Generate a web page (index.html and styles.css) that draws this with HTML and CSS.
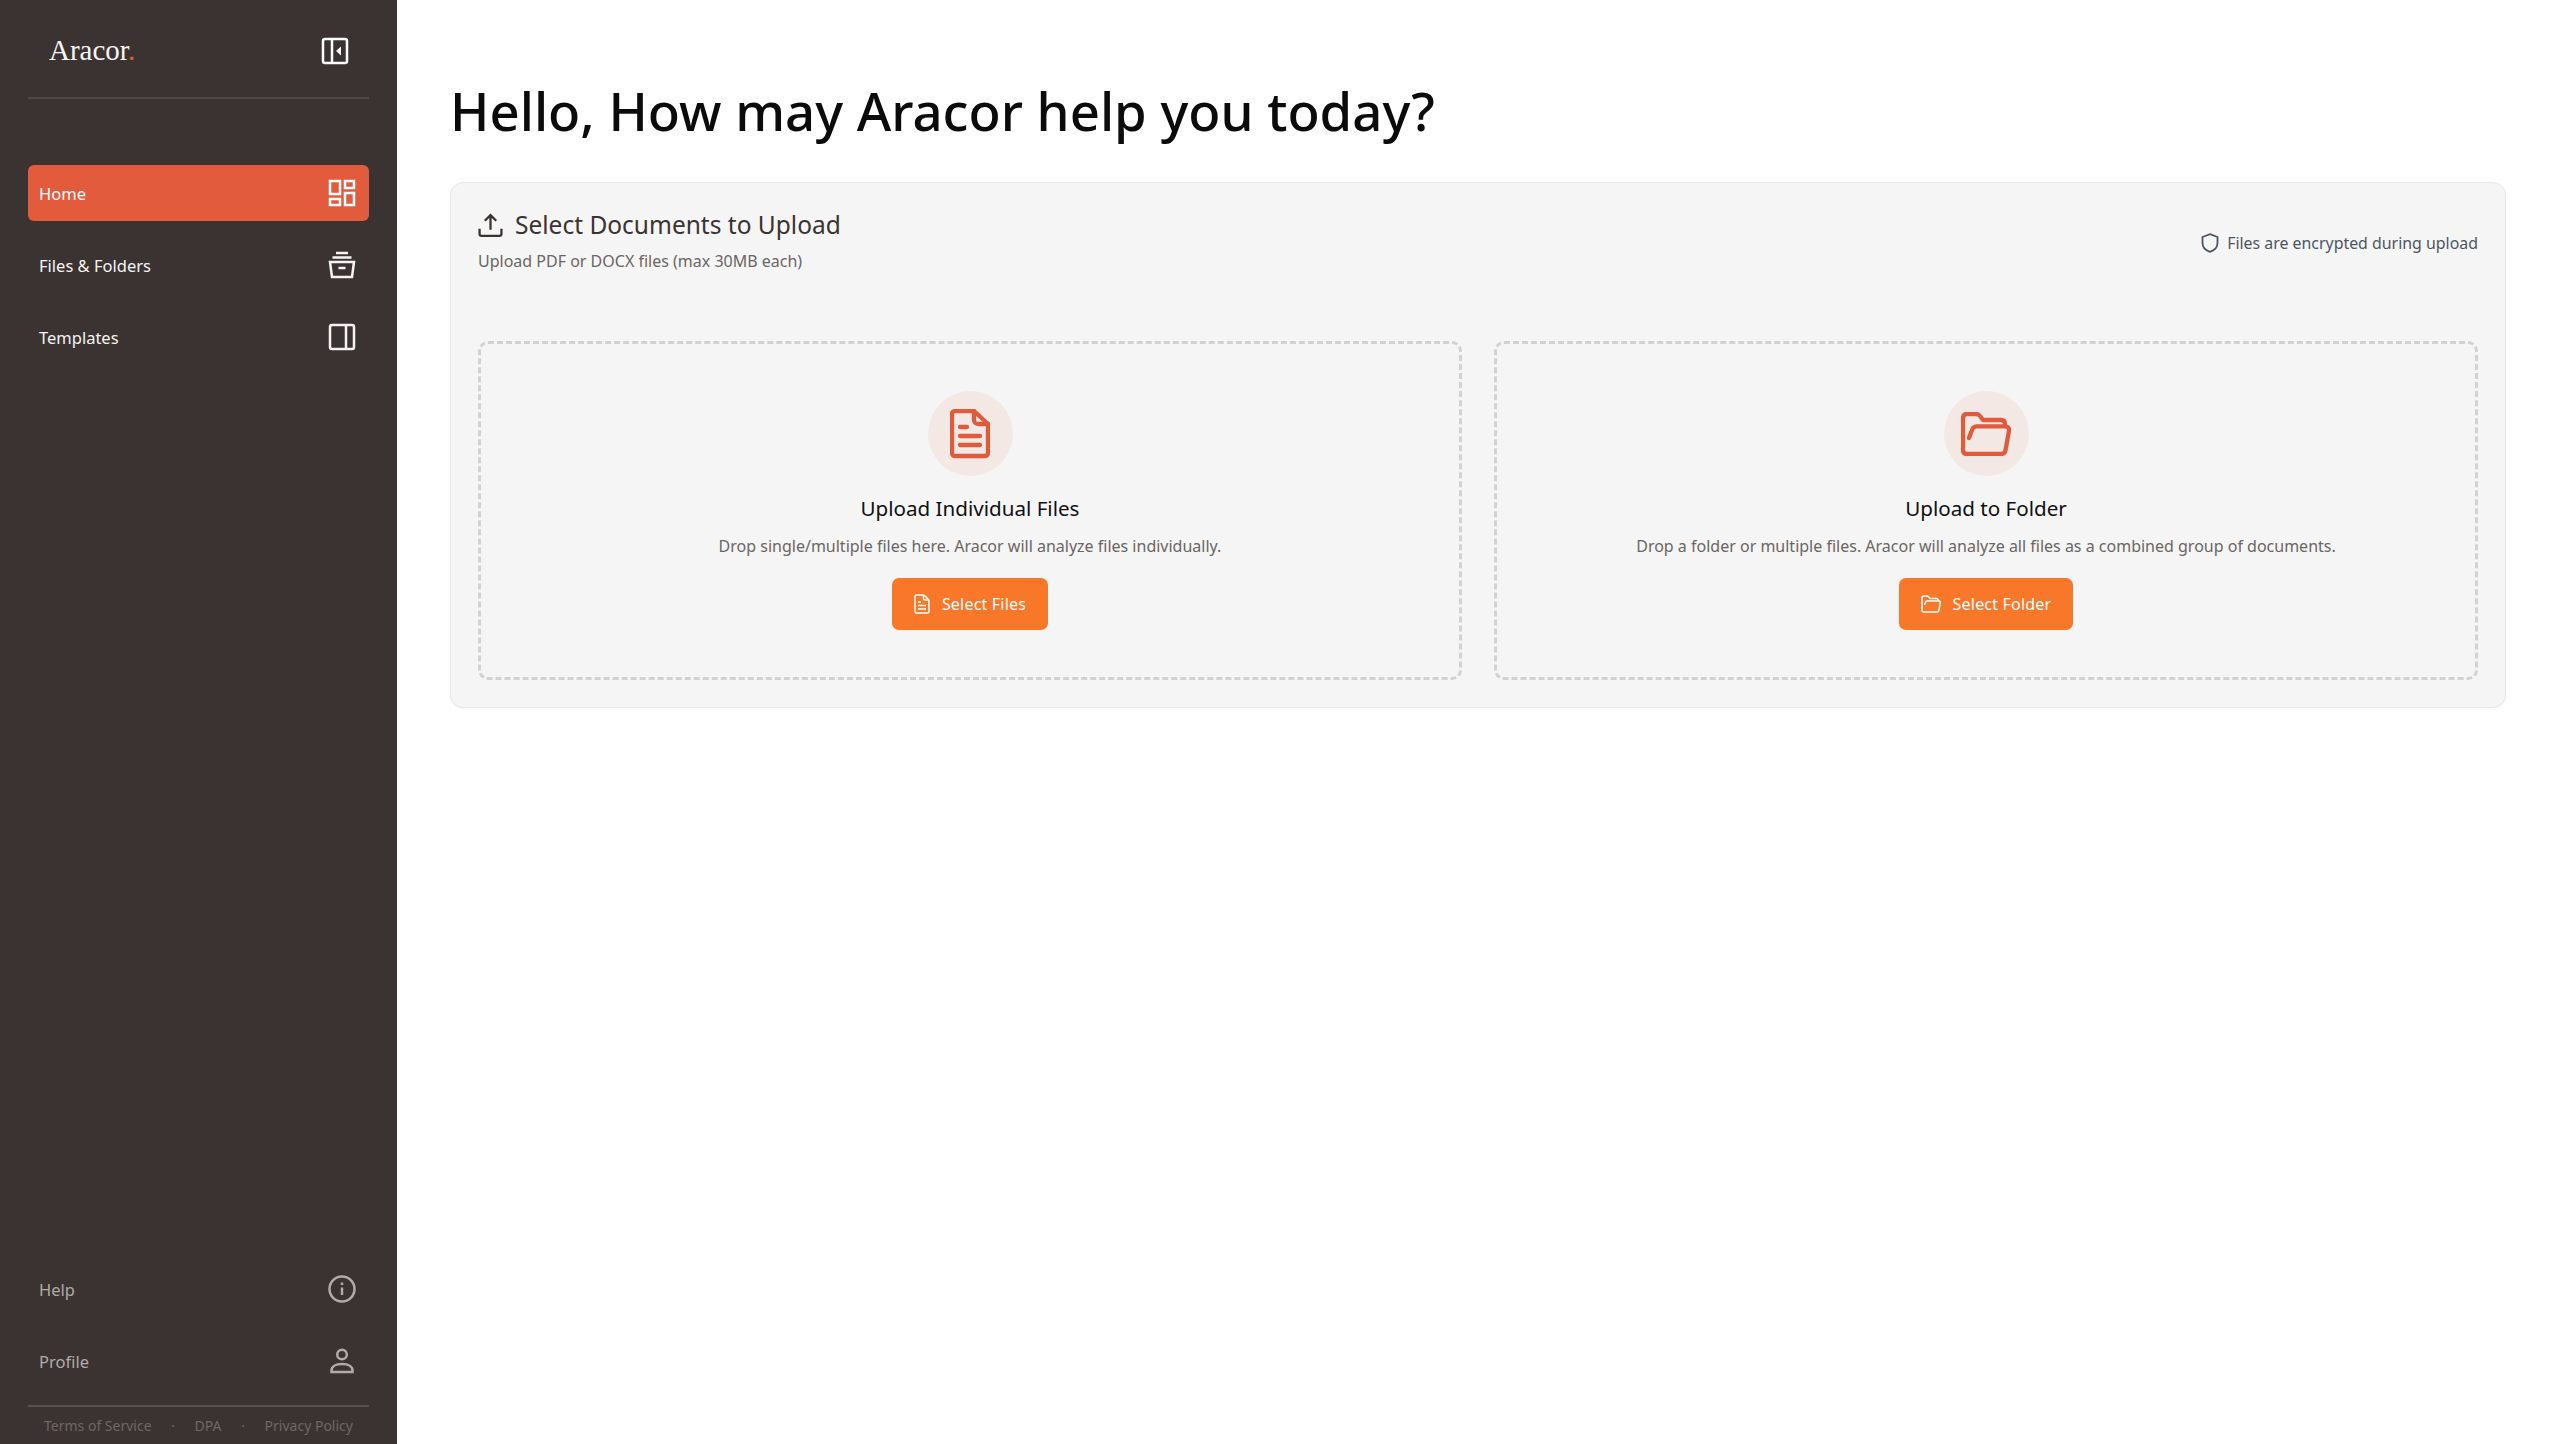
FILE: index.html
```html
<!DOCTYPE html>
<html lang="en">
<head>
<meta charset="utf-8">
<title>Aracor</title>
<link rel="stylesheet" href="styles.css">
</head>
<body>
<div class="app">
  <aside class="sidebar">
    <div class="brand">
      <span class="logo">Aracor<span class="dot">.</span></span>
      <svg class="ico collapse" viewBox="0 0 28 28"><rect x="2" y="2" width="24" height="24" rx="2"/><path d="M11 2v24"/><path class="fill" d="M20 9.500v9l-5-4.500z"/></svg>
    </div>
    <nav class="nav">
      <a class="item active">Home
        <svg class="ico" viewBox="0 0 28 28"><rect x="2" y="2" width="10" height="13"/><rect x="17" y="2" width="9" height="7"/><rect x="2" y="20" width="10" height="6"/><rect x="17" y="14" width="9" height="12"/></svg>
      </a>
      <a class="item">Files &amp; Folders
        <svg class="ico" viewBox="0 0 28 28"><path d="M8 2h12M4.500 6.500h19"/><path d="M2 11h24l-2 15H4z"/><path d="M10.500 17h7"/></svg>
      </a>
      <a class="item">Templates
        <svg class="ico" viewBox="0 0 28 28"><rect x="2" y="2" width="24" height="24" rx="2"/><path d="M18 2v24"/></svg>
      </a>
    </nav>
    <div class="bottom">
      <a class="item muted">Help
        <svg class="ico" viewBox="0 0 28 28"><circle cx="14" cy="14" r="12.500"/><path d="M14 12.500v7.500"/><path d="M14 7.500v2.500"/></svg>
      </a>
      <a class="item muted">Profile
        <svg class="ico" viewBox="0 0 28 28"><circle cx="14" cy="7.500" r="4.800"/><path d="M3.500 25v-1.500c0-4 4-6.500 10.500-6.500s10.500 2.500 10.500 6.500V25z"/></svg>
      </a>
      <footer class="legal"><span>Terms of Service</span><span>·</span><span>DPA</span><span>·</span><span>Privacy Policy</span></footer>
    </div>
  </aside>
  <main class="main">
    <h1 class="title">Hello, How may Aracor help you today?</h1>
    <section class="card">
      <header class="card-head">
        <div class="card-intro">
          <div class="card-title">
            <svg class="up" viewBox="0 0 24 24"><path d="M12 16V2.500M6.500 7.500 12 2l5.500 5.500"/><path d="M1.500 15v5a2 2 0 0 0 2 2h17a2 2 0 0 0 2-2v-5"/></svg>
            Select Documents to Upload
          </div>
          <p class="card-sub">Upload PDF or DOCX files (max 30MB each)</p>
        </div>
        <div class="secure">
          <svg class="shield" viewBox="0 0 18 20"><path d="M9 1.200 16.500 4v6c0 4.500-3 7.300-7.500 8.800C4.500 17.300 1.500 14.500 1.500 10V4z"/></svg>
          Files are encrypted during upload
        </div>
      </header>
      <div class="zones">
        <div class="zone">
          <div class="badge">
            <svg class="big" viewBox="0 0 40 50"><path d="M5 2h19l14 13v29a3 3 0 0 1-3 3H5a3 3 0 0 1-3-3V5a3 3 0 0 1 3-3z"/><path d="M24 2v9a4 4 0 0 0 4 4h10"/><path d="M10 18h7M10 27h20M10 36h20"/></svg>
          </div>
          <h2 class="zone-title">Upload Individual Files</h2>
          <p class="zone-text">Drop single/multiple files here. Aracor will analyze files individually.</p>
          <button class="btn">
            <svg class="small" viewBox="0 0 16 20"><path d="M2.500 1H10l5 5v11.500a1.500 1.500 0 0 1-1.500 1.500h-11A1.500 1.500 0 0 1 1 17.500v-15A1.500 1.500 0 0 1 2.500 1z"/><path d="M9.500 1v3.500A1.500 1.500 0 0 0 11 6h4"/><path d="M4 8h3M4 11.500h8M4 15h8"/></svg>
            Select Files
          </button>
        </div>
        <div class="zone">
          <div class="badge">
            <svg class="big folder" viewBox="0 0 50 44"><path d="M8 26c1.500-4 3-9 4.500-10.500.8-.8 2-1.200 3-1.200H44c3 0 4.500 2 4 4.500l-3.500 19.500c-.5 2.500-2 3.700-4.500 3.700H6c-2.500 0-4-1.500-4-4V6c0-2.500 1.500-4 4-4h9c2 0 3 .7 4 2l3 4h18c2.500 0 4 1.500 4 4v2"/></svg>
          </div>
          <h2 class="zone-title">Upload to Folder</h2>
          <p class="zone-text">Drop a folder or multiple files. Aracor will analyze all files as a combined group of documents.</p>
          <button class="btn">
            <svg class="small wide" viewBox="0 0 20 18"><path d="M3.500 10c.5-1.500 1-3 1.500-3.600.3-.3.700-.4 1.200-.4H18c1 0 1.500.7 1.300 1.700L18 15c-.2 1-.8 2-2 2H2.500C1.500 17 1 16 1 15V2.500C1 1.500 1.500 1 2.500 1H6c.8 0 1.200.3 1.600.8L9 3.500h6.500c1 0 1.500.5 1.500 1.500v1"/></svg>
            Select Folder
          </button>
        </div>
      </div>
    </section>
  </main>
</div>
</body>
</html>
```
FILE: styles.css
```css
* { box-sizing: border-box; }
html, body { margin: 0; height: 100%; }
body { font-family: "Noto Sans", "Open Sans", sans-serif; background: #fff; color: #111; }
.app { display: flex; height: 1444px; }
.sidebar { width: 397px; flex: none; background: #3b3331; padding: 0 28px; display: flex; flex-direction: column; }
.brand { height: 99px; border-bottom: 2px solid #4f4846; display: flex; align-items: center; justify-content: space-between; padding: 4px 20px 0 21px; }
.logo { font-family: "Liberation Serif", serif; font-size: 29px; color: #f7f5f3; }
.dot { color: #e15b3c; }
.ico { width: 28px; height: 28px; fill: none; stroke: currentColor; stroke-width: 2.500; flex: none; }
.ico .fill { fill: currentColor; stroke: none; }
.collapse { color: #fff; }
.nav { margin-top: 66px; display: flex; flex-direction: column; gap: 16px; }
.item { height: 56px; display: flex; align-items: center; justify-content: space-between; padding: 0 13px 0 11px; border-radius: 6px; font-size: 16.500px; color: #f5f3f1; }
.active { background: #e15b3c; color: #fff; }
.bottom { margin-top: auto; display: flex; flex-direction: column; gap: 16px; }
.muted { color: #b0aba8; }
.legal { border-top: 2px solid #57504e; height: 39px; padding: 0 16px; display: flex; align-items: center; justify-content: space-between; font-size: 14px; color: #6e6765; }
.main { flex: 1; min-width: 0; padding: 75px 54px 0 53px; }
.title { margin: 0 0 35px; font-size: 52.700px; line-height: 72px; font-weight: 500; color: #0b0b0b; }
.card { background: #f5f5f5; border: 1px solid #e8e8e8; border-radius: 13px; padding: 27px; box-shadow: 0 1px 2px rgba(0,0,0,.04); }
.card-head { height: 66px; display: flex; justify-content: space-between; align-items: center; margin-bottom: 65px; }
.card-intro { padding-bottom: 4px; }
.card-title { display: flex; align-items: center; gap: 12px; font-size: 24.500px; line-height: 32px; color: #3b3331; }
.up { width: 25px; height: 25px; fill: none; stroke: #3b3331; stroke-width: 2.200; }
.card-sub { margin: 8px 0 0; font-size: 16px; line-height: 24px; color: #6b6563; }
.secure { display: flex; align-items: center; gap: 8px; font-size: 15.900px; color: #4b5563; }
.shield { width: 18px; height: 20px; fill: none; stroke: #4b5563; stroke-width: 1.800; }
.zones { display: grid; grid-template-columns: 1fr 1fr; gap: 32px; }
.zone { height: 339px; border: 3px dashed #d4d2d0; border-radius: 10px; padding-top: 47px; display: flex; flex-direction: column; align-items: center; }
.badge { width: 85px; height: 85px; border-radius: 50%; background: #f4e8e4; display: flex; align-items: center; justify-content: center; }
.big { width: 40px; height: 50px; fill: none; stroke: #e05a3c; stroke-width: 4.300; stroke-linecap: round; stroke-linejoin: round; }
.folder { width: 50px; height: 44px; }
.zone-title { margin: 16px 0 0; font-size: 20.600px; line-height: 32px; font-weight: 400; color: #111; }
.zone-text { margin: 10px 0 0; font-size: 16px; line-height: 24px; color: #6b6563; }
.btn { margin-top: 20px; height: 52px; padding: 0 22px; border: 0; border-radius: 7px; background: #f97729; color: #fff; font: inherit; font-size: 16px; letter-spacing: .2px; display: flex; align-items: center; gap: 12px; }
.small { width: 16px; height: 20px; fill: none; stroke: #fff; stroke-width: 1.500; stroke-linejoin: round; }
.wide { width: 20px; height: 18px; }
```
